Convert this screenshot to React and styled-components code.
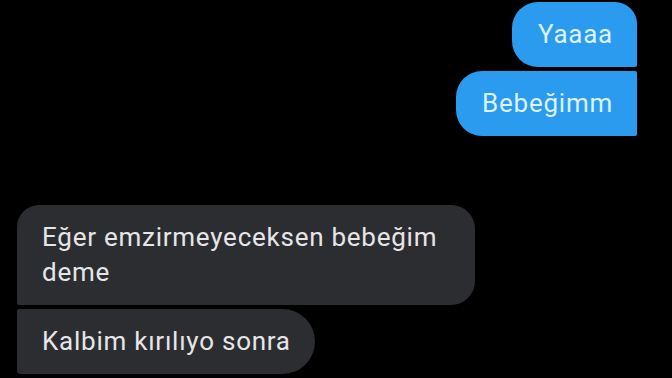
import React from "react";
import styled, { createGlobalStyle } from "styled-components";

const GlobalStyle = createGlobalStyle`
	html, body {
		margin: 0;
		padding: 0;
		background: #000;
	}
	body {
		font-family: Roboto, "Liberation Sans", sans-serif;
	}
`;

const messages = [
	{ id: 1, mine: true, text: "Yaaaa", shape: "first" },
	{ id: 2, mine: true, text: "Bebeğimm", shape: "last" },
	{ id: 3, mine: false, text: "Eğer emzirmeyeceksen bebeğim deme", shape: "first" },
	{ id: 4, mine: false, text: "Kalbim kırılıyo sonra", shape: "last" },
];

const radii = {
	mine: {
		first: "26px 22px 2px 26px",
		last: "26px 2px 2px 26px",
	},
	theirs: {
		first: "22px 24px 24px 2px",
		last: "2px 34px 34px 4px",
	},
};

function App() {
	const mine = messages.filter((m) => m.mine);
	const theirs = messages.filter((m) => !m.mine);

	return (
		<StScreen>
			<GlobalStyle />
			<StGroup side="right">
				{mine.map((m) => (
					<StBubble key={m.id} mine radius={radii.mine[m.shape]}>
						{m.text}
					</StBubble>
				))}
			</StGroup>

			<StGroup side="left">
				{theirs.map((m) => (
					<StBubble key={m.id} radius={radii.theirs[m.shape]}>
						{m.text}
					</StBubble>
				))}
			</StGroup>
		</StScreen>
	);
}

export default App;

const StScreen = styled.main`
	display: flex;
	flex-direction: column;
	justify-content: space-between;
	width: 672px;
	height: 378px;
	box-sizing: border-box;
	padding: 2px 0 4px;
	background: #000;
	overflow: hidden;
`;

const StGroup = styled.section`
	display: flex;
	flex-direction: column;
	align-items: ${({ side }) => (side === "right" ? "flex-end" : "flex-start")};
	gap: 4px;
	padding: ${({ side }) => (side === "right" ? "0 35px 0 0" : "0 0 0 17px")};
`;

const StBubble = styled.div`
	box-sizing: border-box;
	max-width: 458px;
	padding: 15px ${({ mine }) => (mine ? "24px 15px 26px" : "24px 15px 25px")};
	border-radius: ${({ radius }) => radius};
	background: ${({ mine }) => (mine ? "#2b9bf0" : "#2c2d31")};
	color: ${({ mine }) => (mine ? "#dcf2ff" : "#e6e6e8")};
	font-size: 26px;
	letter-spacing: 0.75px;
	line-height: 35px;
`;
